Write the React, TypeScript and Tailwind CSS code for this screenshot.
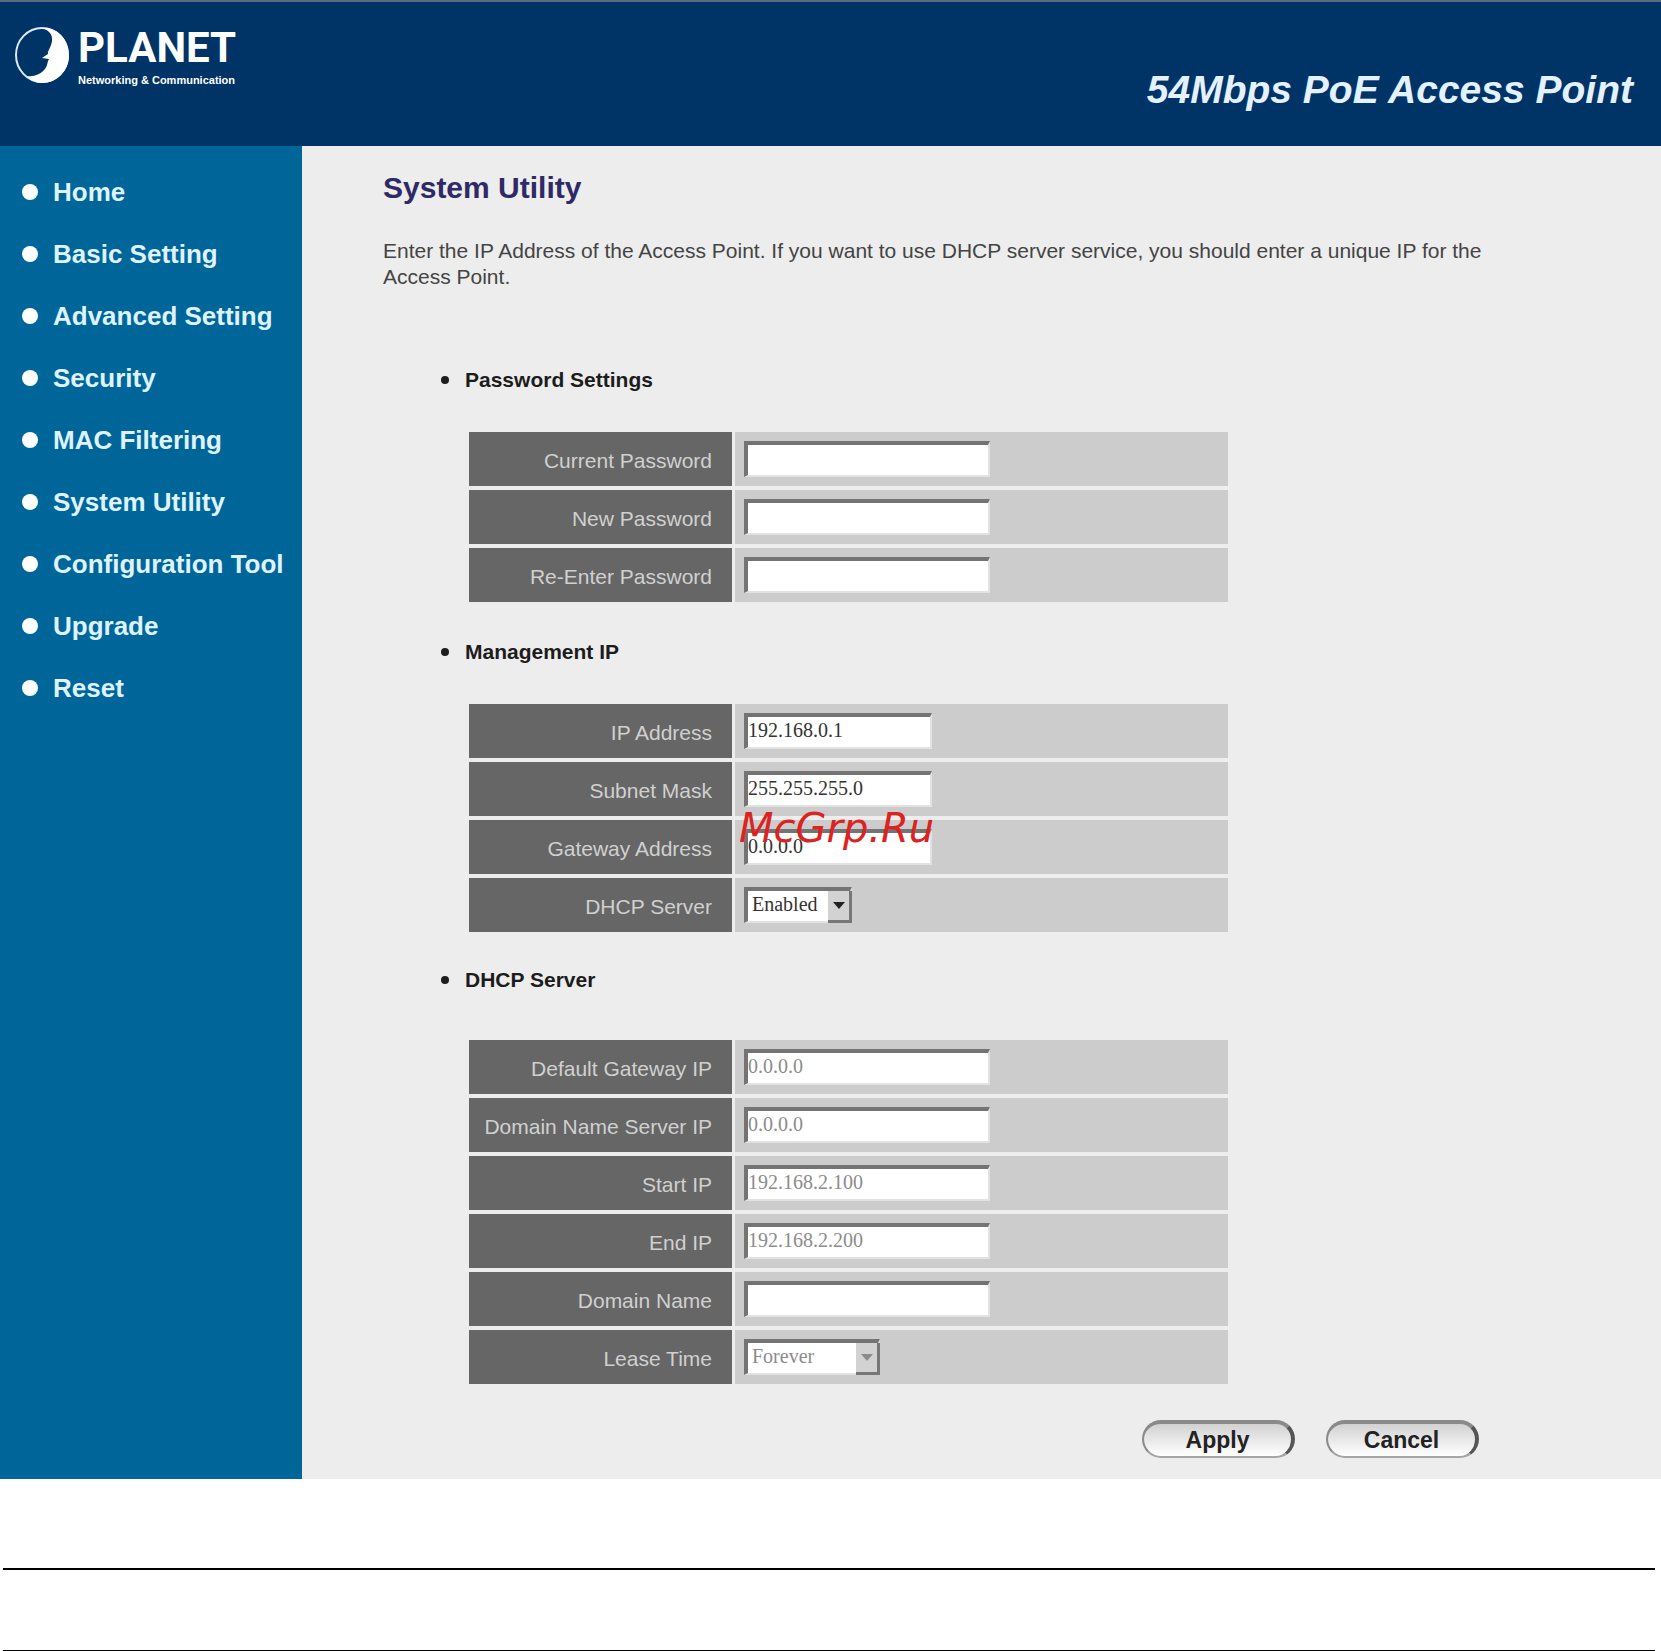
import type { ReactNode } from "react";

const navItems = [
  "Home",
  "Basic Setting",
  "Advanced Setting",
  "Security",
  "MAC Filtering",
  "System Utility",
  "Configuration Tool",
  "Upgrade",
  "Reset",
];

const fieldClass =
  "block h-9 border-t-4 border-l-4 border-r-2 border-b-2 border-t-[#747474] border-l-[#747474] border-r-[#e2e2e2] border-b-[#e2e2e2] bg-white pb-1 font-['Liberation_Serif',serif] text-[20px] leading-6 text-[#333] disabled:text-[#8c8c8c] outline-none";

function Logo() {
  return (
    <a href="#home" className="flex items-start gap-2 text-white" aria-label="PLANET">
      <svg width="56" height="58" viewBox="0 0 56 58" aria-hidden="true">
        <ellipse cx="28" cy="29" rx="26" ry="27" fill="none" stroke="#dbe9f7" strokeWidth="2" />
        <path
          d="M28 2C44 1 55 14 55 29C55 45 43 57 28 57C21 57 16 54 13 50C20 51 27 48 31 43C34 39 33 36 35 33L28 32L34 28C33 25 37 22 38 15C39 9 35 4 28 2Z"
          fill="#fff"
        />
      </svg>
      <span className="flex flex-col font-bold">
        <span className="font-['Roboto',sans-serif] text-[42px] leading-11">PLANET</span>
        <span className="pt-1 text-[11px] leading-3">Networking &amp; Communication</span>
      </span>
    </a>
  );
}

function Section({ title, children }: { title: string; children: ReactNode }) {
  return (
    <section>
      <h2 className="flex items-center gap-4 text-[21px] leading-6 font-bold text-[#1c1c1c]">
        <span className="h-2 w-2 rounded-full bg-[#1c1c1c]" />
        {title}
      </h2>
      {children}
    </section>
  );
}

function Rows({ children }: { children: ReactNode }) {
  return <div className="ml-7 flex w-[759px] flex-col gap-1">{children}</div>;
}

function Row({ id, label, children }: { id: string; label: string; children: ReactNode }) {
  return (
    <div className="flex h-[54px] gap-[3px]">
      <label
        htmlFor={id}
        className="flex w-[263px] shrink-0 items-center justify-end bg-[#666] pt-1 pr-5 text-[21px] leading-6 text-[#d0d0d0]"
      >
        {label}
      </label>
      <div className="flex flex-1 items-center bg-[#ccc] pl-[9px]">{children}</div>
    </div>
  );
}

function SelectBox({
  id,
  value,
  disabled,
  className,
}: {
  id: string;
  value: string;
  disabled?: boolean;
  className: string;
}) {
  return (
    <div className={`relative ${className}`}>
      <select id={id} disabled={disabled} className={`${fieldClass} w-full appearance-none pl-1 opacity-100`}>
        <option>{value}</option>
      </select>
      <span className="pointer-events-none absolute top-1 right-0 flex h-8 w-6 items-center justify-center border-r-3 border-b-3 border-[#777] bg-[#d2d2d2]">
        <svg width="12" height="7" viewBox="0 0 12 7" aria-hidden="true">
          <path d="M0 0H12L6 7Z" fill={disabled ? "#8c8c8c" : "#222"} />
        </svg>
      </span>
    </div>
  );
}

function PillButton({ children }: { children: ReactNode }) {
  return (
    <button
      type="button"
      className="h-[38px] w-[153px] rounded-full border-2 border-t-4 border-r-4 border-[#8a8a8a] border-r-[#555] border-b-[#a5a5a5] bg-linear-to-b from-[#d2d2d2] to-white text-[23px] leading-7 font-bold text-[#222]"
    >
      {children}
    </button>
  );
}

export default function App() {
  return (
    <div className="min-h-screen bg-white font-['Liberation_Sans',Arial,sans-serif]">
      <header className="flex h-[146px] items-start justify-between border-t-2 border-[#5f6b80] bg-[#003366] pr-7 pl-3.5">
        <div className="pt-6">
          <Logo />
        </div>
        <p className="pt-16 text-[39px] leading-12 font-bold text-[#e4f1ff] italic">54Mbps PoE Access Point</p>
      </header>

      <div className="flex">
        <nav className="w-[302px] shrink-0 bg-[#006699] pt-[15px]">
          <ul>
            {navItems.map((item) => (
              <li key={item}>
                <a
                  href="#"
                  className="flex h-[62px] items-center gap-[15px] pl-[22px] text-[26px] leading-8 font-bold whitespace-nowrap text-[#dff3ff]"
                >
                  <span className="h-4 w-4 rounded-full bg-white" />
                  {item}
                </a>
              </li>
            ))}
          </ul>
        </nav>

        <main className="flex-1 bg-[#ededed] pt-6 pb-[21px] pl-[81px]">
          <h1 className="text-[30px] leading-9 font-bold text-[#2f2a66]">System Utility</h1>
          <p className="mt-8 max-w-[1140px] text-[21px] leading-[26px] text-[#444]">
            Enter the IP Address of the Access Point. If you want to use DHCP server service, you should enter a unique
            IP for the Access Point.
          </p>

          <form className="mt-[78px] pl-[58px]">
            <Section title="Password Settings">
              <div className="mt-10">
                <Rows>
                  <Row id="current" label="Current Password">
                    <input id="current" type="password" className={`${fieldClass} w-[246px]`} />
                  </Row>
                  <Row id="new" label="New Password">
                    <input id="new" type="password" className={`${fieldClass} w-[246px]`} />
                  </Row>
                  <Row id="reenter" label="Re-Enter Password">
                    <input id="reenter" type="password" className={`${fieldClass} w-[246px]`} />
                  </Row>
                </Rows>
              </div>
            </Section>

            <div className="mt-[38px]">
              <Section title="Management IP">
                <div className="mt-10">
                  <Rows>
                    <Row id="ip" label="IP Address">
                      <input id="ip" defaultValue="192.168.0.1" className={`${fieldClass} w-[188px]`} />
                    </Row>
                    <Row id="mask" label="Subnet Mask">
                      <input id="mask" defaultValue="255.255.255.0" className={`${fieldClass} w-[188px]`} />
                    </Row>
                    <div className="relative">
                      <Row id="gateway" label="Gateway Address">
                        <input id="gateway" defaultValue="0.0.0.0" className={`${fieldClass} w-[188px]`} />
                      </Row>
                      <span className="pointer-events-none absolute -top-4 left-[270px] font-['DejaVu_Sans',sans-serif] text-[40px] leading-12 text-[#dd2222] italic">
                        McGrp.Ru
                      </span>
                    </div>
                    <Row id="dhcp" label="DHCP Server">
                      <SelectBox id="dhcp" value="Enabled" className="w-[108px]" />
                    </Row>
                  </Rows>
                </div>
              </Section>
            </div>

            <div className="mt-9">
              <Section title="DHCP Server">
                <div className="mt-12">
                  <Rows>
                    <Row id="defgw" label="Default Gateway IP">
                      <input id="defgw" disabled defaultValue="0.0.0.0" className={`${fieldClass} w-[246px]`} />
                    </Row>
                    <Row id="dns" label="Domain Name Server IP">
                      <input id="dns" disabled defaultValue="0.0.0.0" className={`${fieldClass} w-[246px]`} />
                    </Row>
                    <Row id="start" label="Start IP">
                      <input id="start" disabled defaultValue="192.168.2.100" className={`${fieldClass} w-[246px]`} />
                    </Row>
                    <Row id="end" label="End IP">
                      <input id="end" disabled defaultValue="192.168.2.200" className={`${fieldClass} w-[246px]`} />
                    </Row>
                    <Row id="domain" label="Domain Name">
                      <input id="domain" className={`${fieldClass} w-[246px]`} />
                    </Row>
                    <Row id="lease" label="Lease Time">
                      <SelectBox id="lease" value="Forever" disabled className="w-[136px]" />
                    </Row>
                  </Rows>
                </div>
              </Section>
            </div>

            <div className="mt-9 flex justify-end gap-[31px] pr-[182px]">
              <PillButton>Apply</PillButton>
              <PillButton>Cancel</PillButton>
            </div>
          </form>
        </main>
      </div>

      <footer className="mr-1.5 ml-[3px] flex flex-col gap-20 pt-[89px]">
        <hr className="border-t-2 border-black" />
        <hr className="border-t-2 border-black" />
      </footer>
    </div>
  );
}
